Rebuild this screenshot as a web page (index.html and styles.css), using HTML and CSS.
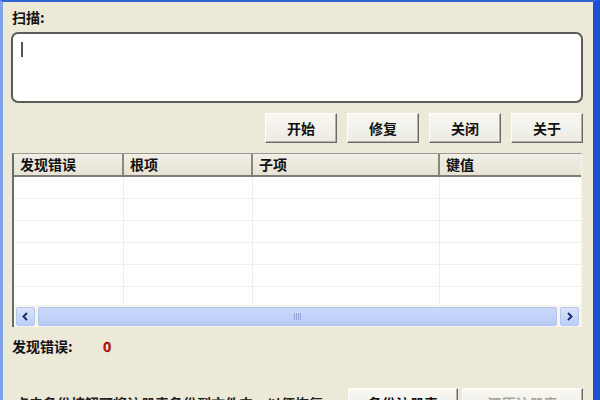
FILE: index.html
```html
<!DOCTYPE html>
<html>
<head>
<meta charset="utf-8">
<link rel="stylesheet" href="styles.css">
</head>
<body>
<div class="window">
  <div class="label">扫描:</div>
  <div class="scanbox"><span class="caret"></span></div>
  <div class="btnrow">
    <button class="btn">开始</button>
    <button class="btn">修复</button>
    <button class="btn">关闭</button>
    <button class="btn">关于</button>
  </div>
  <div class="listview">
    <div class="lv-head">
      <div class="hc c1">发现错误</div>
      <div class="hc c2">根项</div>
      <div class="hc c3">子项</div>
      <div class="hc c4">键值</div>
    </div>
    <div class="lv-body">
      <div class="row"><div class="c c1"></div><div class="c c2"></div><div class="c c3"></div><div class="c c4"></div></div>
      <div class="row"><div class="c c1"></div><div class="c c2"></div><div class="c c3"></div><div class="c c4"></div></div>
      <div class="row"><div class="c c1"></div><div class="c c2"></div><div class="c c3"></div><div class="c c4"></div></div>
      <div class="row"><div class="c c1"></div><div class="c c2"></div><div class="c c3"></div><div class="c c4"></div></div>
      <div class="row"><div class="c c1"></div><div class="c c2"></div><div class="c c3"></div><div class="c c4"></div></div>
      <div class="row last"><div class="c c1"></div><div class="c c2"></div><div class="c c3"></div><div class="c c4"></div></div>
    </div>
    <div class="hscroll">
      <div class="sb-btn"><svg width="9" height="9" viewBox="0 0 9 9"><path d="M6 1 L2.5 4.5 L6 8" fill="none" stroke="#1d2f6e" stroke-width="2"/></svg></div>
      <div class="sb-thumb"><span class="grip"></span></div>
      <div class="sb-btn"><svg width="9" height="9" viewBox="0 0 9 9"><path d="M3 1 L6.5 4.5 L3 8" fill="none" stroke="#1d2f6e" stroke-width="2"/></svg></div>
    </div>
  </div>
  <div class="status">
    <span class="label">发现错误:</span>
    <span class="count">0</span>
  </div>
  <div class="bottom">
    <div class="hint">点击备份按钮可将注册表备份到文件中，以便恢复</div>
    <div class="bbtns">
      <button class="btn wide">备份注册表</button>
      <button class="btn wide disabled">还原注册表</button>
    </div>
  </div>
</div>
</body>
</html>
```

FILE: styles.css
```css
* { box-sizing: border-box; }
html, body { margin: 0; padding: 0; }
body {
  width: 600px;
  height: 400px;
  overflow: hidden;
  font-family: "Noto Sans CJK SC", "DejaVu Sans", sans-serif;
  font-size: 14px;
  color: #111;
}
.window {
  width: 600px;
  height: 400px;
  background: #ECE9D8;
  border-top: 2px solid #2f63d6;
  border-left: 3px solid #7fa2e4;
  border-right: 7px solid #1e4fd0;
  padding: 6px 10px 0 8px;
  display: flex;
  flex-direction: column;
  overflow: hidden;
}
.window > * { flex: none; }
.label {
  font-weight: 700;
  font-size: 14px;
  line-height: 18px;
  margin-left: 1px;
}
.scanbox {
  margin-top: 6px;
  height: 71px;
  background: #fff;
  border: 2px solid #5c5c5c;
  border-radius: 7px;
  position: relative;
}
.caret {
  position: absolute;
  left: 8px;
  top: 8px;
  width: 2px;
  height: 15px;
  background: #555;
}
.btnrow {
  margin-top: 10px;
  display: flex;
  justify-content: flex-end;
  gap: 10px;
}
.btn {
  width: 72px;
  height: 30px;
  font-family: inherit;
  font-size: 14px;
  font-weight: 700;
  color: #111;
  background: linear-gradient(#f8f7f2, #ecebe4);
  border: 1px solid;
  border-color: #ffffff #6a6a6a #6a6a6a #ffffff;
  box-shadow: inset -1px -1px 0 #b3b1a6;
  padding: 0;
}
.listview {
  margin: 10px 1px 0 1px;
  height: 174px;
  background: #fff;
  border-left: 2px solid #6b6b6b;
  border-top: 1px solid #9c9a90;
  border-right: 1px solid #f5f4ee;
  display: flex;
  flex-direction: column;
}
.lv-head {
  display: flex;
  height: 23px;
  flex: none;
  background: linear-gradient(#f1efe6, #e6e3d6);
  border-bottom: 2px solid #7d7b72;
}
.hc {
  font-size: 14px;
  font-weight: 700;
  line-height: 21px;
  padding-left: 6px;
  border-right: 2px solid #8a887e;
}
.c1 { width: 110px; flex: none; }
.c2 { width: 129px; flex: none; }
.c3 { width: 187px; flex: none; }
.c4 { flex: 1; }
.hc.c4 { border-right: none; }
.lv-body { flex: 1; display: flex; flex-direction: column; }
.row {
  display: flex;
  height: 22px;
  flex: none;
  border-bottom: 1px solid #eeeeee;
}
.row.last { border-bottom: none; flex: 1; }
.c { border-right: 1px solid #ececec; }
.c.c4 { border-right: none; }
.hscroll {
  height: 22px;
  flex: none;
  display: flex;
  align-items: center;
  gap: 3px;
  padding: 0 2px;
  background: #f6f5f0;
}
.sb-btn {
  width: 19px;
  height: 19px;
  flex: none;
  border: 1px solid #b7c8ee;
  border-radius: 2px;
  background: linear-gradient(#d9e3fb, #bccdf6);
  display: flex;
  align-items: center;
  justify-content: center;
}
.sb-thumb {
  flex: 1;
  height: 19px;
  border: 1px solid #b2c5ef;
  border-radius: 2px;
  background: linear-gradient(#cbd9fa, #b8cbf5);
  display: flex;
  align-items: center;
  justify-content: center;
}
.grip {
  width: 8px;
  height: 7px;
  background: repeating-linear-gradient(90deg, #8fa6dc 0 1px, transparent 1px 2px);
}
.status {
  margin-top: 10px;
  display: flex;
  align-items: center;
}
.status .label { width: 91px; }
.count {
  color: #cc1111;
  font-weight: 700;
  font-size: 14px;
  line-height: 18px;
  -webkit-text-stroke: 0.3px #600;
}
.bottom {
  margin-top: 33px;
  display: flex;
  align-items: flex-start;
  justify-content: space-between;
}
.hint {
  font-size: 14px;
  font-weight: 700;
  margin-top: 5px;
  margin-left: 4px;
  color: #222;
}
.bbtns { display: flex; gap: 4px; }
.btn.wide { width: 110px; }
.btn.wide.disabled { width: 121px; color: #a7a699; }
```
